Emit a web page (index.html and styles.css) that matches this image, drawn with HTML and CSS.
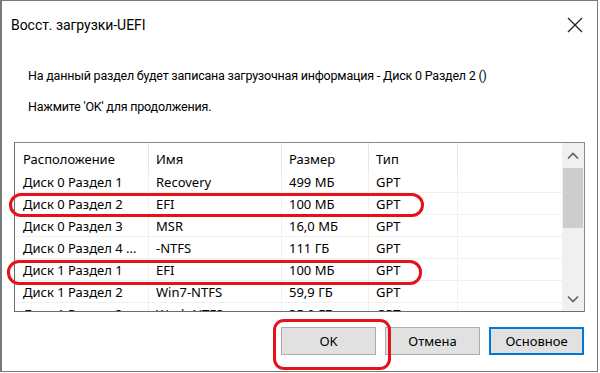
FILE: index.html
```html
<!DOCTYPE html>
<html lang="ru">

<head>
  <meta charset="UTF-8">
  <meta name="viewport" content="width=device-width, initial-scale=1.0">
  <title>Восст. загрузки-UEFI</title>
  <link rel="stylesheet" href="styles.css">
</head>

<body>

  <div class="dialog">
    <div class="titlebar">
      <span class="title">Восст. загрузки-UEFI</span>
      <span class="close">
        <svg width="16" height="16" viewBox="0 0 16 16">
          <path d="M1 1 L15 15 M15 1 L1 15" stroke="#222" stroke-width="1.3" fill="none" />
        </svg>
      </span>
    </div>

    <div class="message">
      <p>На данный раздел будет записана загрузочная информация - Диск 0 Раздел 2 ()</p>
      <p>Нажмите 'OK' для продолжения.</p>
    </div>

    <div class="listview">
      <div class="list-body">
        <div class="row head">
          <div class="cell c1">Расположение</div>
          <div class="cell c2">Имя</div>
          <div class="cell c3">Размер</div>
          <div class="cell c4">Тип</div>
          <div class="cell c5"></div>
        </div>
        <div class="row">
          <div class="cell c1">Диск 0 Раздел 1</div>
          <div class="cell c2">Recovery</div>
          <div class="cell c3">499 МБ</div>
          <div class="cell c4">GPT</div>
          <div class="cell c5"></div>
        </div>
        <div class="row">
          <div class="cell c1">Диск 0 Раздел 2</div>
          <div class="cell c2">EFI</div>
          <div class="cell c3">100 МБ</div>
          <div class="cell c4">GPT</div>
          <div class="cell c5"></div>
        </div>
        <div class="row">
          <div class="cell c1">Диск 0 Раздел 3</div>
          <div class="cell c2">MSR</div>
          <div class="cell c3">16,0 МБ</div>
          <div class="cell c4">GPT</div>
          <div class="cell c5"></div>
        </div>
        <div class="row">
          <div class="cell c1">Диск 0 Раздел 4 ...</div>
          <div class="cell c2">-NTFS</div>
          <div class="cell c3">111 ГБ</div>
          <div class="cell c4">GPT</div>
          <div class="cell c5"></div>
        </div>
        <div class="row">
          <div class="cell c1">Диск 1 Раздел 1</div>
          <div class="cell c2">EFI</div>
          <div class="cell c3">100 МБ</div>
          <div class="cell c4">GPT</div>
          <div class="cell c5"></div>
        </div>
        <div class="row">
          <div class="cell c1">Диск 1 Раздел 2</div>
          <div class="cell c2">Win7-NTFS</div>
          <div class="cell c3">59,9 ГБ</div>
          <div class="cell c4">GPT</div>
          <div class="cell c5"></div>
        </div>
        <div class="row">
          <div class="cell c1">Диск 1 Раздел 3</div>
          <div class="cell c2">Work-NTFS</div>
          <div class="cell c3">35,0 ГБ</div>
          <div class="cell c4">GPT</div>
          <div class="cell c5"></div>
        </div>
      </div>
      <div class="scrollbar">
        <div class="arrow">
          <svg width="12" height="8" viewBox="0 0 12 8">
            <path d="M1 6.5 L6 1.5 L11 6.5" stroke="#606060" stroke-width="1.6" fill="none" />
          </svg>
        </div>
        <div class="track">
          <div class="thumb"></div>
        </div>
        <div class="arrow">
          <svg width="12" height="8" viewBox="0 0 12 8">
            <path d="M1 1.5 L6 6.5 L11 1.5" stroke="#606060" stroke-width="1.6" fill="none" />
          </svg>
        </div>
      </div>
    </div>

    <div class="buttons">
      <button class="btn">OK</button>
      <button class="btn">Отмена</button>
      <button class="btn default">Основное</button>
    </div>

    <!-- красные пометки -->
    <div class="mark mark-row1"></div>
    <div class="mark mark-row2"></div>
    <div class="mark mark-ok"></div>
  </div>

</body>

</html>
```

FILE: styles.css
```css
* {
  box-sizing: border-box;
}

body {
  margin: 0;
  background: #fff;
  font-family: "Noto Sans", "Liberation Sans", sans-serif;
  color: #000;
}

p {
  margin: 0;
}

.dialog {
  position: relative;
  width: 598px;
  height: 372px;
  border: 1px solid #7a7a7a;
  border-left-width: 2px;
  background: #fff;
}

.titlebar {
  height: 47px;
  display: flex;
  align-items: center;
  justify-content: space-between;
  padding: 0 14px 0 9px;
}

.title {
  font-family: Roboto, "Noto Sans", sans-serif;
  font-size: 14px;
  letter-spacing: -0.05px;
  color: #000;
}

.close {
  display: flex;
}

.message {
  font-family: Roboto, "Noto Sans", sans-serif;
  padding-left: 26px;
  padding-top: 12px;
  font-size: 12.5px;
  letter-spacing: -0.2px;
  line-height: 31px;
  height: 94px;
}

.listview {
  margin-left: 12px;
  width: 571px;
  height: 170px;
  border: 1px solid #828790;
  border-left-color: #6d6d6d;
  border-bottom-color: #6d6d6d;
  display: flex;
  overflow: hidden;
}

.list-body {
  flex: 1;
  overflow: hidden;
}

.row {
  display: flex;
  height: 22px;
  font-size: 13px;
}

.row.head {
  height: 28px;
}

.cell {
  padding-left: 7px;
  display: flex;
  align-items: center;
  white-space: nowrap;
  border-right: 1px solid #f0f0f0;
  border-bottom: 1px solid #f0f0f0;
}

.row.head .cell {
  border-bottom: none;
  border-right-color: #e5e5e5;
  padding-top: 3px;
}

.c1 {
  width: 134px;
  padding-left: 8px;
}

.c2 {
  width: 133px;
}

.c3 {
  width: 87px;
}

.c4 {
  width: 89px;
}

.c5 {
  flex: 1;
  border-right: none;
}

.scrollbar {
  width: 22px;
  background: #f0f0f0;
  display: flex;
  flex-direction: column;
}

.arrow {
  height: 25px;
  display: flex;
  align-items: center;
  justify-content: center;
}

.track {
  flex: 1;
  padding: 0;
}

.thumb {
  margin: 0 1px;
  height: 60px;
  background: #cdcdcd;
}

.buttons {
  display: flex;
  justify-content: flex-end;
  gap: 9px;
  padding: 15px 13px 0 0;
}

.btn {
  width: 95px;
  height: 28px;
  background: #e1e1e1;
  border: 1px solid #adadad;
  font-family: "Noto Sans", "Liberation Sans", sans-serif;
  font-size: 13px;
  color: #000;
  padding: 0;
}

.btn.default {
  border: 2px solid #0078d7;
}

.mark {
  position: absolute;
  border: 3px solid #e4121b;
  border-radius: 12px;
}

.mark-row1 {
  left: 7px;
  top: 192px;
  width: 415px;
  height: 24px;
}

.mark-row2 {
  left: 5px;
  top: 259px;
  width: 415px;
  height: 25px;
}

.mark-ok {
  left: 271px;
  top: 318px;
  width: 118px;
  height: 51px;
  border-radius: 11px;
}
```
